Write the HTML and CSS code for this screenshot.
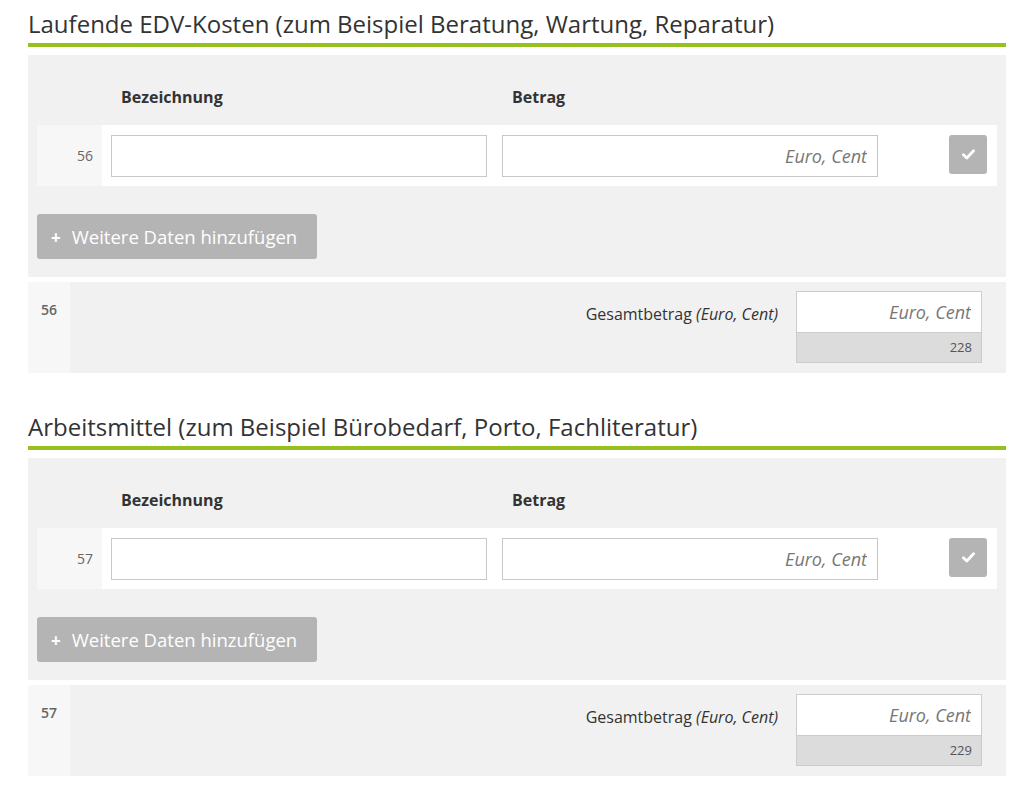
FILE: index.html
```html
<!DOCTYPE html>
<html lang="de">
<head>
  <meta charset="UTF-8">
  <title>Ausgaben</title>
  <link rel="stylesheet" href="styles.css">
</head>
<body>

  <div class="page">
    <section class="section">
      <h2 class="section-title">Laufende EDV-Kosten (zum Beispiel Beratung, Wartung, Reparatur)</h2>
      <div class="table-block">
        <div class="table-head">
          <span class="col-name">Bezeichnung</span>
          <span class="col-amount">Betrag</span>
        </div>
        <div class="table-row">
          <div class="row-num">56</div>
          <input class="field field-name" type="text">
          <input class="field field-amount" type="text" placeholder="Euro, Cent">
          <button class="check-btn" type="button">
            <svg width="13" height="11" viewBox="0 0 13 11"><path d="M1.4 5.8 L4.8 9 L11.6 1.8" fill="none" stroke="#fff" stroke-width="2.8" stroke-linecap="round" stroke-linejoin="round"/></svg>
          </button>
        </div>
        <button class="add-btn" type="button"><span class="plus">+</span>Weitere Daten hinzufügen</button>
      </div>
      <div class="sum-block">
        <div class="sum-num">56</div>
        <div class="sum-main">
          <span class="sum-label">Gesamtbetrag <em>(Euro, Cent)</em></span>
          <div class="sum-box">
            <input class="sum-input" type="text" placeholder="Euro, Cent">
            <div class="sum-code">228</div>
          </div>
        </div>
      </div>
    </section>

    <section class="section">
      <h2 class="section-title">Arbeitsmittel (zum Beispiel Bürobedarf, Porto, Fachliteratur)</h2>
      <div class="table-block">
        <div class="table-head">
          <span class="col-name">Bezeichnung</span>
          <span class="col-amount">Betrag</span>
        </div>
        <div class="table-row">
          <div class="row-num">57</div>
          <input class="field field-name" type="text">
          <input class="field field-amount" type="text" placeholder="Euro, Cent">
          <button class="check-btn" type="button">
            <svg width="13" height="11" viewBox="0 0 13 11"><path d="M1.4 5.8 L4.8 9 L11.6 1.8" fill="none" stroke="#fff" stroke-width="2.8" stroke-linecap="round" stroke-linejoin="round"/></svg>
          </button>
        </div>
        <button class="add-btn" type="button"><span class="plus">+</span>Weitere Daten hinzufügen</button>
      </div>
      <div class="sum-block">
        <div class="sum-num">57</div>
        <div class="sum-main">
          <span class="sum-label">Gesamtbetrag <em>(Euro, Cent)</em></span>
          <div class="sum-box">
            <input class="sum-input" type="text" placeholder="Euro, Cent">
            <div class="sum-code">229</div>
          </div>
        </div>
      </div>
    </section>
  </div>

</body>
</html>
```

FILE: styles.css
```css
body {
  margin: 0;
  padding: 0;
  background-color: #fff;
  font-family: "Open Sans", "Liberation Sans", sans-serif;
  color: #333;
}
.page {
  width: 978px;
  padding: 9px 0 0 28px;
}
.section {
  margin-bottom: 39px;
}
.section-title {
  margin: 0 0 8px 0;
  font-size: 24px;
  font-weight: 400;
  line-height: 30px;
  padding-bottom: 4px;
  border-bottom: 4px solid #95c11f;
  color: #333;
}
.table-block {
  background-color: #f1f1f1;
  padding: 0 9px 18px 9px;
}
.table-head {
  display: flex;
  height: 70px;
  box-sizing: border-box;
  padding-top: 31px;
  font-size: 16px;
  font-weight: 700;
  line-height: 22px;
  color: #333;
}
.col-name {
  margin-left: 84px;
  width: 391px;
}
.table-row {
  display: flex;
  align-items: flex-start;
  height: 61px;
  background-color: #fff;
}
.row-num {
  width: 56px;
  height: 61px;
  padding-right: 9px;
  background-color: #f7f7f7;
  text-align: right;
  font-size: 14px;
  line-height: 61px;
  color: #666;
}
.field {
  box-sizing: border-box;
  width: 376px;
  height: 42px;
  margin-top: 10px;
  border: 1px solid #c8c8c8;
  border-radius: 0;
  background: #fff;
  padding: 0 10px;
  font-family: "Open Sans", "Liberation Sans", sans-serif;
  font-size: 18px;
  color: #333;
}
.field-name {
  margin-left: 9px;
}
.field-amount {
  margin-left: 15px;
  text-align: right;
}
.field::placeholder,
.sum-input::placeholder {
  color: #777;
  font-style: italic;
}
.check-btn {
  width: 38px;
  height: 39px;
  margin: 10px 0 0 71px;
  border: none;
  border-radius: 3px;
  background-color: #b4b4b4;
  display: flex;
  align-items: center;
  justify-content: center;
  padding: 0;
}
.add-btn {
  display: block;
  width: 280px;
  height: 45px;
  margin-top: 28px;
  border: none;
  border-radius: 3px;
  background-color: #b4b4b4;
  color: #fff;
  font-family: "Open Sans", "Liberation Sans", sans-serif;
  font-size: 18.5px;
  text-align: left;
  padding: 0 0 0 14px;
}
.add-btn .plus {
  font-weight: 700;
  font-size: 17px;
  margin-right: 11px;
}
.sum-block {
  display: flex;
  margin-top: 5px;
  height: 91px;
}
.sum-num {
  width: 42px;
  background-color: #f7f7f7;
  text-align: center;
  font-size: 14px;
  font-weight: 600;
  color: #666;
  padding-top: 18px;
  box-sizing: border-box;
  line-height: 20px;
}
.sum-main {
  flex: 1;
  background-color: #f1f1f1;
  display: flex;
  justify-content: flex-end;
  align-items: flex-start;
  padding: 9px 24px 0 0;
}
.sum-label {
  font-size: 16px;
  line-height: 22px;
  margin-top: 12px;
  margin-right: 18px;
  color: #333;
}
.sum-box {
  width: 186px;
  border: 1px solid #ccc;
  box-sizing: border-box;
}
.sum-input {
  display: block;
  box-sizing: border-box;
  width: 100%;
  height: 41px;
  border: none;
  border-bottom: 1px solid #ccc;
  padding: 0 10px;
  text-align: right;
  font-family: "Open Sans", "Liberation Sans", sans-serif;
  font-size: 18px;
  background: #fff;
}
.sum-code {
  height: 29px;
  background-color: #dcdcdc;
  text-align: right;
  font-size: 13px;
  line-height: 29px;
  padding-right: 9px;
  color: #555;
}
```
